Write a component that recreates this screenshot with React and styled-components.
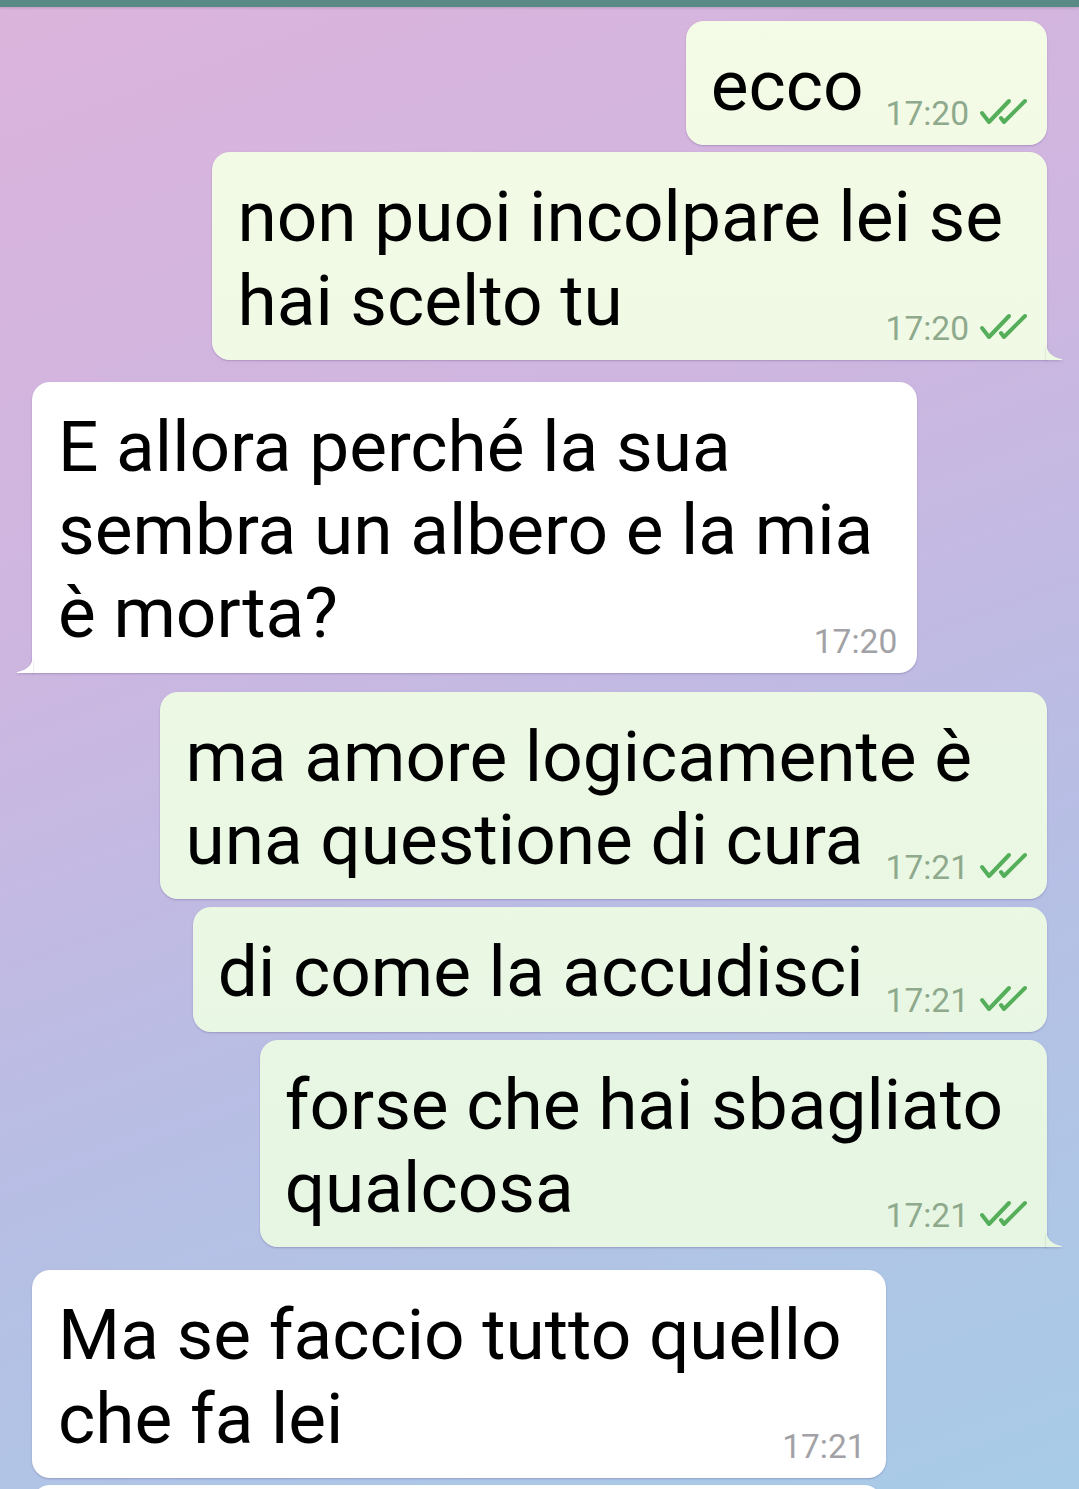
import React from 'react';
import styled, { createGlobalStyle } from 'styled-components';

const GlobalStyle = createGlobalStyle`
    html, body {
        margin: 0;
        padding: 0;
        overflow: hidden;
    }
    body {
        font-family: Roboto, "Noto Sans", "Liberation Sans", sans-serif;
    }
`;

const Screen = styled.div`
    width: 1079px;
    height: 1489px;
    overflow: hidden;
    display: flex;
    flex-direction: column;
    background: linear-gradient(160deg, #dcb4dc 0%, #cdb6e0 35%, #b8bde4 62%, #a8cce8 100%);
`;

const TopBar = styled.div`
    height: 7px;
    flex-shrink: 0;
    background: #5a8a86;
    box-shadow: 0 1px 3px rgba(0, 0, 0, 0.15);
`;

const Row = styled.div`
    display: flex;
    justify-content: ${p => (p.$out ? 'flex-end' : 'flex-start')};
    padding: 0 32px;
    margin-top: ${p => p.$gap}px;
    flex-shrink: 0;
`;

const Bubble = styled.div`
    position: relative;
    display: flex;
    flex-direction: column;
    min-width: ${p => p.$minWidth || 0}px;
    box-sizing: border-box;
    padding: 23px 20px 18px ${p => (p.$out ? 25 : 26)}px;
    border-radius: 18px;
    ${p => p.$tail && (p.$out ? 'border-bottom-right-radius: 0;' : 'border-bottom-left-radius: 0;')}
    background: ${p => (p.$out ? 'linear-gradient(180deg, #f4fbe6 0px, #e3f5e2 1489px) fixed' : '#ffffff')};
    box-shadow: 0 1px 2px rgba(70, 50, 110, 0.28);
    color: #000;
    font-size: 71.2px;
    line-height: 83.3px;
`;

const Line = styled.div`
    white-space: pre;
    padding-right: 24px;
`;

const LastLine = styled.div`
    display: flex;
    align-items: flex-end;
    justify-content: space-between;
    gap: 22px;
    white-space: pre;
`;

const Meta = styled.span`
    display: flex;
    align-items: center;
    gap: 10px;
    font-size: 33.5px;
    line-height: 33px;
    margin-bottom: -3px;
    color: ${p => (p.$out ? '#8ea98c' : '#a2a2a6')};
`;

const Checks = styled.svg`
    width: 48px;
    height: 28px;
    margin-top: -5px;
    flex-shrink: 0;
`;

const Tail = styled.svg`
    position: absolute;
    bottom: 0;
    width: 17px;
    height: 18px;
    ${p => (p.$out ? 'right: -16px;' : 'left: -16px; transform: scaleX(-1);')}
    filter: drop-shadow(0 1px 1px rgba(70, 50, 110, 0.25));
`;

const DoubleCheck = () => (
    <Checks viewBox="0 0 48 28" fill="none" stroke="#55ae5a" strokeWidth="4" strokeLinecap="round" strokeLinejoin="round">
        <path d="M3 16 L10 25 L30 4" />
        <path d="M22 21 L25 25 L46 4" />
    </Checks>
);

const Message = ({ out, lines, time, tail, tailColor, gap, minWidth }) => {
    const body = lines.slice(0, -1);
    const last = lines[lines.length - 1];
    return (
        <Row $out={out} $gap={gap}>
            <Bubble $out={out} $tail={tail} $minWidth={minWidth}>
                {body.map((l, i) => (
                    <Line key={i}>{l}</Line>
                ))}
                <LastLine>
                    <span>{last}</span>
                    {time && (
                        <Meta $out={out}>
                            {time}
                            {out && <DoubleCheck />}
                        </Meta>
                    )}
                </LastLine>
                {tail && (
                    <Tail $out={out} viewBox="0 0 17 18">
                        <path d="M0 0 C0 9 5 15 15.5 17 C16.6 17.2 16.6 18 15.5 18 L0 18 Z" fill={tailColor} />
                    </Tail>
                )}
            </Bubble>
        </Row>
    );
};

const messages = [
    { out: true, gap: 14, lines: ['ecco'], time: '17:20' },
    { out: true, gap: 7, lines: ['non puoi incolpare lei se', 'hai scelto tu'], time: '17:20', tail: true, tailColor: '#eef9e4' },
    { out: false, gap: 22, lines: ['E allora perché la sua', 'sembra un albero e la mia', 'è morta?'], time: '17:20', tail: true, tailColor: '#ffffff' },
    { out: true, gap: 19, lines: ['ma amore logicamente è', 'una questione di cura'], time: '17:21' },
    { out: true, gap: 8, lines: ['di come la accudisci'], time: '17:21' },
    { out: true, gap: 8, lines: ['forse che hai sbagliato', 'qualcosa'], time: '17:21', tail: true, tailColor: '#e5f6e2' },
    { out: false, gap: 23, lines: ['Ma se faccio tutto quello', 'che fa lei'], time: '17:21' },
    { out: false, gap: 7, lines: [' '], time: null, minWidth: 850 },
];

const App = () => (
    <>
        <GlobalStyle />
        <Screen>
            <TopBar />
            {messages.map((m, i) => (
                <Message key={i} {...m} />
            ))}
        </Screen>
    </>
);

export default App;
